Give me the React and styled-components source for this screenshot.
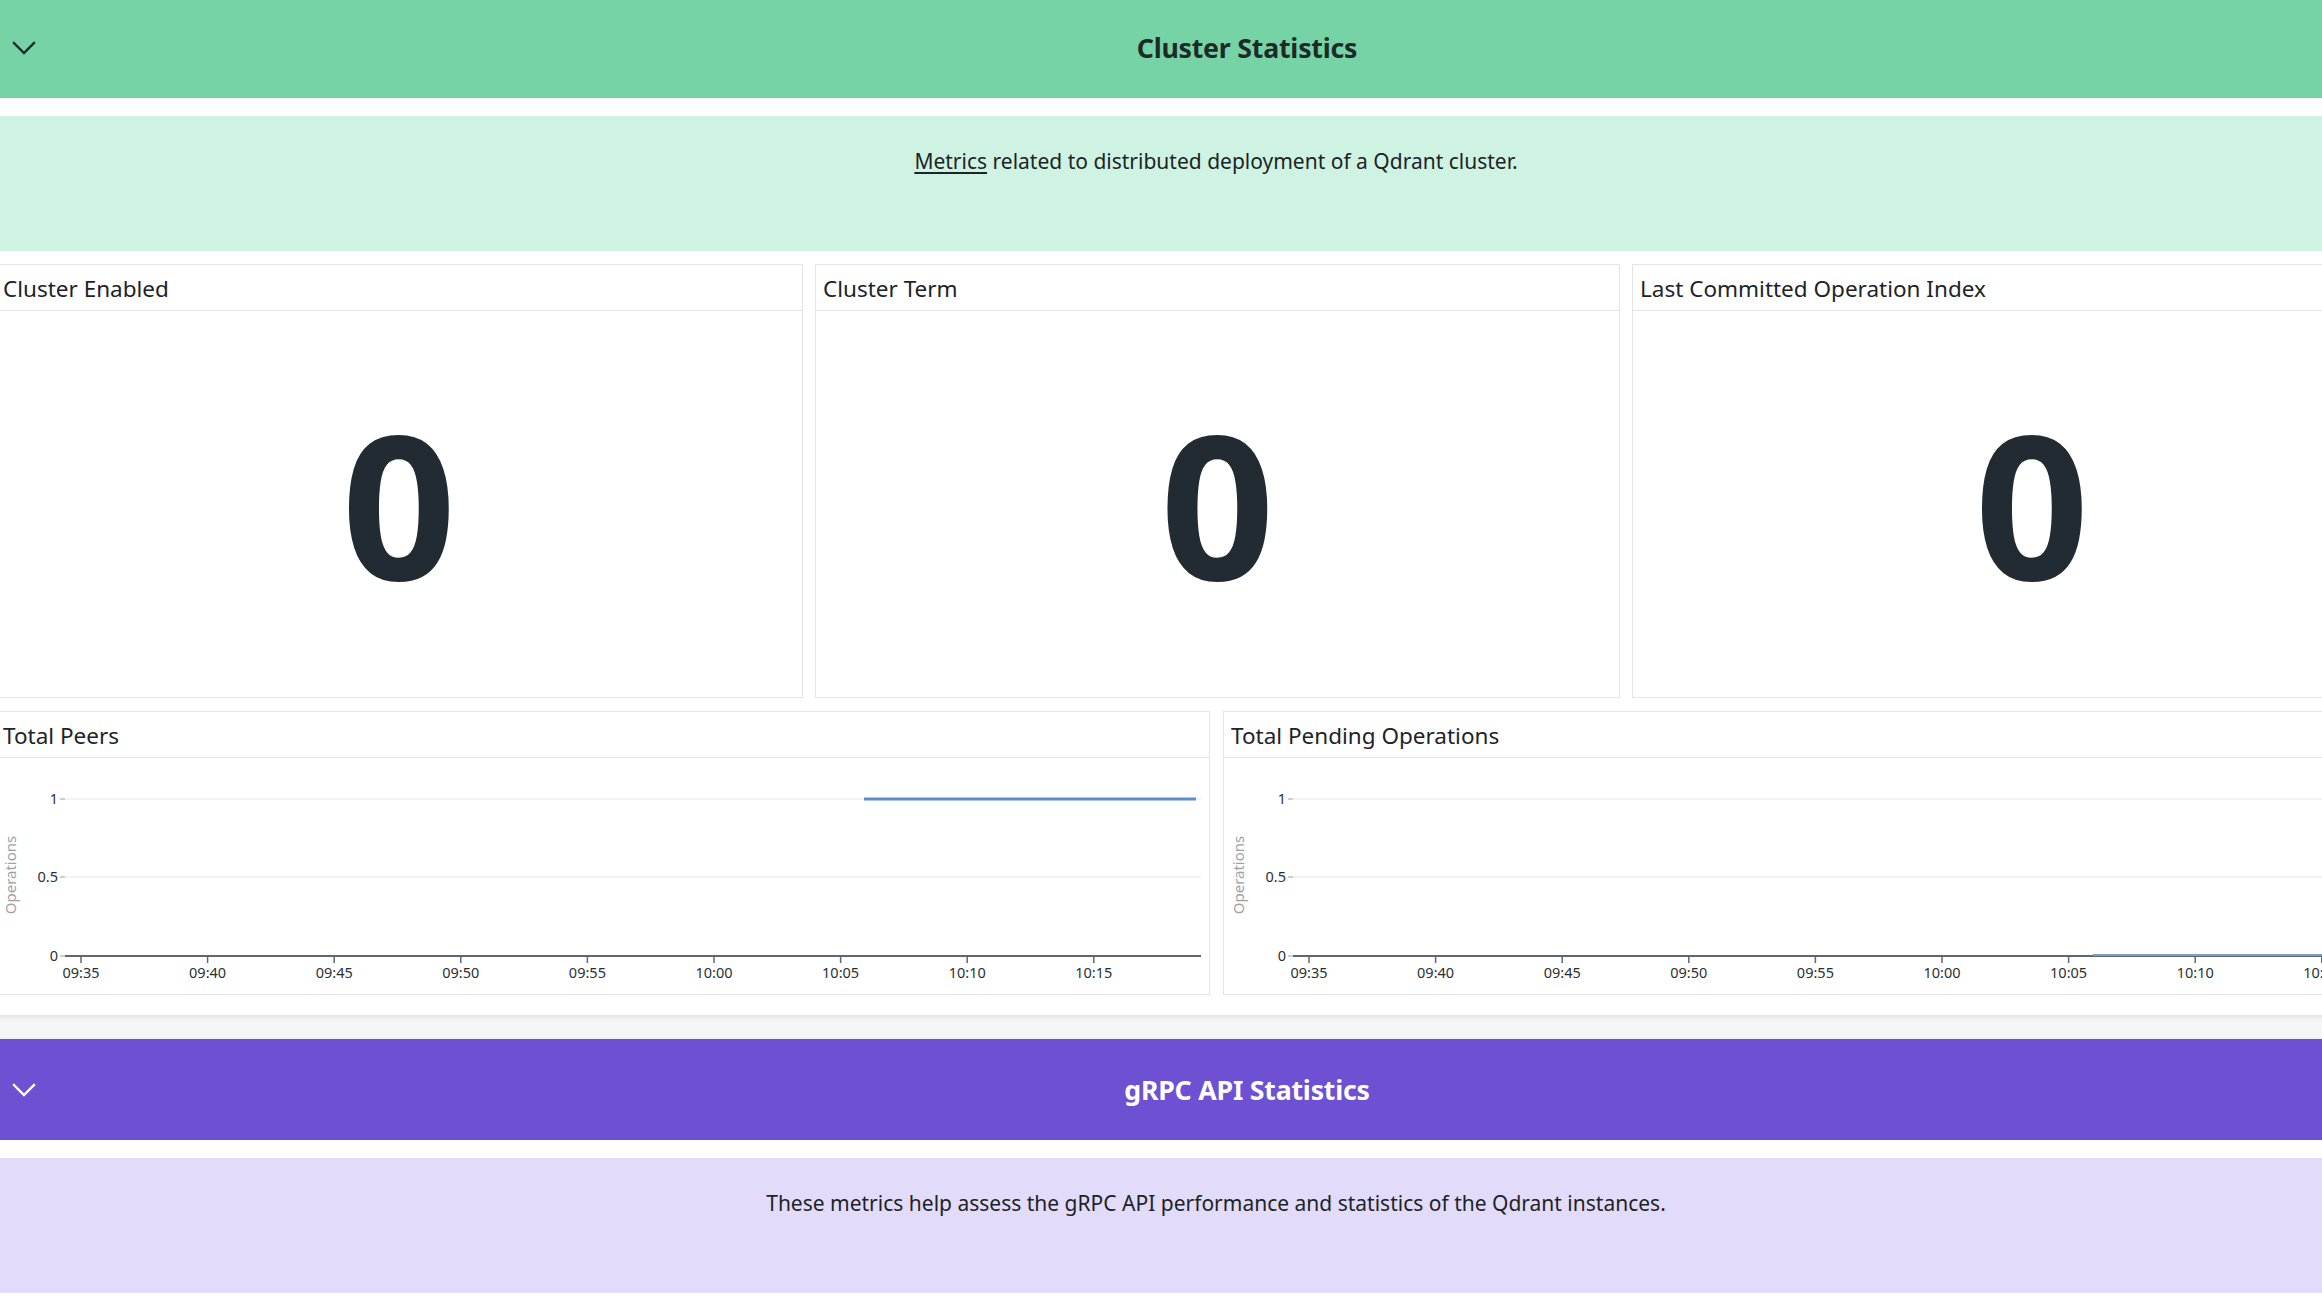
import React from "react";
import styled, { createGlobalStyle } from "styled-components";

const GlobalStyle = createGlobalStyle`
  html, body { margin: 0; padding: 0; }
  body {
    background: #f4f5f7;
    font-family: "Noto Sans", "Open Sans", sans-serif;
    overflow: hidden;
  }
  * { box-sizing: border-box; }
`;

const Page = styled.div`
  width: 2437px;
  margin-left: -5px;
  margin-top: -3px;
  display: flex;
  flex-direction: column;
  gap: 24px;
`;

const Section = styled.section`
  background: #ffffff;
  display: flex;
  flex-direction: column;
  padding-bottom: ${(p) => p.$padBottom || 0}px;
  box-shadow: 0 2px 5px rgba(0, 0, 0, 0.09);
`;

const Header = styled.div`
  height: 101px;
  background: ${(p) => p.$bg};
  color: ${(p) => p.$fg};
  display: flex;
  align-items: center;
`;

const ChevronBox = styled.div`
  width: 67px;
  padding-left: 17px;
  display: flex;
  align-items: center;
`;

const Title = styled.h2`
  flex: 1;
  margin: 0;
  text-align: center;
  font-size: 26.7px;
  font-weight: 700;
  letter-spacing: -0.2px;
`;

const Description = styled.div`
  margin-top: 18px;
  height: 135px;
  background: ${(p) => p.$bg};
  color: #1d2427;
  font-size: 21px;
  text-align: center;
  padding-top: 31px;
  padding-left: 5px;
  line-height: 28px;
`;

const Link = styled.a`
  color: inherit;
  text-decoration: underline;
  text-underline-offset: 3px;
`;

const PanelRow = styled.div`
  display: grid;
  grid-template-columns: ${(p) => p.$cols};
  column-gap: ${(p) => p.$gap}px;
  height: ${(p) => p.$h}px;
  margin-top: ${(p) => p.$mt}px;
`;

const Panel = styled.div`
  border: 1px solid #e3e4e5;
  background: #fff;
  display: flex;
  flex-direction: column;
  min-width: 0;
`;

const PanelHeader = styled.div`
  height: 46px;
  border-bottom: 1px solid #e3e4e5;
  display: flex;
  align-items: center;
  padding-left: 7px;
  padding-top: 2px;
  font-size: 22.5px;
  color: #1d2427;
  white-space: nowrap;
`;

const StatBody = styled.div`
  flex: 1;
  display: flex;
  align-items: center;
  justify-content: center;
  font-size: 200px;
  font-weight: 700;
  color: #212b31;
  line-height: 1;
  padding-bottom: 2px;
`;

const ChartBody = styled.div`
  flex: 1;
  overflow: hidden;
`;

const Chevron = ({ color }) => (
  <svg width="24" height="14" viewBox="0 0 24 14">
    <path d="M2 2 L12 12 L22 2" fill="none" stroke={color} strokeWidth="2.4" strokeLinecap="square" />
  </svg>
);

const TICKS = ["09:35", "09:40", "09:45", "09:50", "09:55", "10:00", "10:05", "10:10", "10:15"];

const Chart = ({ width, series }) => {
  const left = 69;
  const right = width - 8;
  const y1 = 41;
  const y05 = 119;
  const y0 = 198;
  const axis = "#5f6870";
  return (
    <svg width={width} height={236} style={{ display: "block" }}>
      <text
        x={0}
        y={0}
        transform={`translate(20 117) rotate(-90)`}
        textAnchor="middle"
        fontSize="15"
        fill="#a0a2a4"
        fontFamily="Noto Sans, sans-serif"
      >
        Operations
      </text>
      {[
        [y1, "1"],
        [y05, "0.5"],
        [y0, "0"],
      ].map(([y, l]) => (
        <g key={l}>
          <text x={62} y={y + 5} textAnchor="end" fontSize="14.5" fill="#2a2f33" fontFamily="Noto Sans, sans-serif">
            {l}
          </text>
          <line x1={64} x2={left} y1={y} y2={y} stroke="#9aa0a5" strokeWidth="1" />
          {l !== "0" && <line x1={left} x2={right} y1={y} y2={y} stroke="#e6e7e8" strokeWidth="1" />}
        </g>
      ))}
      <line x1={left} x2={right} y1={y0} y2={y0} stroke={axis} strokeWidth="2" />
      {series && (
        <line x1={series.x1} x2={Math.min(series.x2, right)} y1={series.y} y2={series.y} stroke={series.color} strokeWidth={series.w} />
      )}
      {TICKS.map((t, i) => {
        const x = 85 + i * 126.6;
        return (
          <g key={t}>
            <line x1={x} x2={x} y1={y0} y2={y0 + 7} stroke={axis} strokeWidth="1.5" />
            <text x={x} y={y0 + 22} textAnchor="middle" fontSize="14.5" fill="#2a2f33" fontFamily="Noto Sans, sans-serif">
              {t}
            </text>
          </g>
        );
      })}
    </svg>
  );
};

const StatPanel = ({ title, value }) => (
  <Panel>
    <PanelHeader>{title}</PanelHeader>
    <StatBody>{value}</StatBody>
  </Panel>
);

const ChartPanel = ({ title, width, series }) => (
  <Panel>
    <PanelHeader>{title}</PanelHeader>
    <ChartBody>
      <Chart width={width} series={series} />
    </ChartBody>
  </Panel>
);

export default function App() {
  return (
    <>
      <GlobalStyle />
      <Page>
        <Section $padBottom={22}>
          <Header $bg="#76d3a5" $fg="#1c2b28">
            <ChevronBox>
              <Chevron color="#1c2b28" />
            </ChevronBox>
            <Title>Cluster Statistics</Title>
          </Header>
          <Description $bg="#cff3e2">
            <Link>Metrics</Link> related to distributed deployment of a Qdrant cluster.
          </Description>
          <PanelRow $cols="808px 805px 1fr" $gap={12} $h={434} $mt={13}>
            <StatPanel title="Cluster Enabled" value="0" />
            <StatPanel title="Cluster Term" value="0" />
            <StatPanel title="Last Committed Operation Index" value="0" />
          </PanelRow>
          <PanelRow $cols="1215px 1fr" $gap={13} $h={282} $mt={13}>
            <ChartPanel
              title="Total Peers"
              width={1213}
              series={{ x1: 868, x2: 1200, y: 41, color: "#5a8fd6", w: 3 }}
            />
            <ChartPanel
              title="Total Pending Operations"
              width={1207}
              series={{ x1: 869, x2: 1300, y: 197, color: "#7c9ccb", w: 2 }}
            />
          </PanelRow>
        </Section>
        <Section $padBottom={40}>
          <Header $bg="#6e50d2" $fg="#ffffff">
            <ChevronBox>
              <Chevron color="#ffffff" />
            </ChevronBox>
            <Title>gRPC API Statistics</Title>
          </Header>
          <Description $bg="#e2dbfa">
            These metrics help assess the gRPC API performance and statistics of the Qdrant instances.
          </Description>
        </Section>
      </Page>
    </>
  );
}
